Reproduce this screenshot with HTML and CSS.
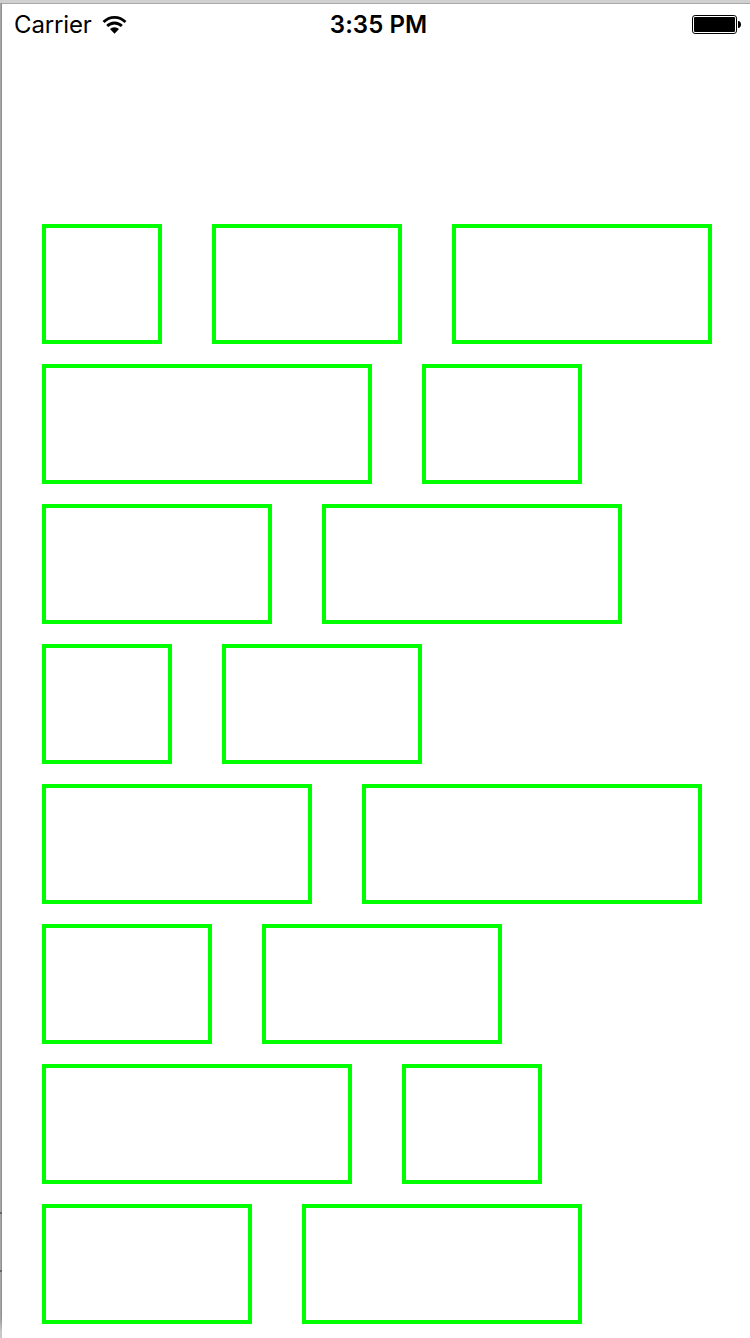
FILE: index.html
```html
<!DOCTYPE html>
<html lang="en">
<head>
<meta charset="utf-8">
<title>Flow layout</title>
<link rel="stylesheet" href="styles.css">
</head>
<body>
<div class="window">
  <div class="window-edge"><i class="notch notch-upper"></i><i class="notch notch-lower"></i></div>
  <main class="screen">
    <header class="status-bar">
      <div class="carrier">
        <span class="carrier-name">Carrier</span>
        <svg class="wifi" width="25" height="20" viewBox="0 0 26 20" preserveAspectRatio="none">
          <g fill="none" stroke="#000" stroke-width="2.9">
            <path d="M1.6 7.1a16 16 0 0 1 22.8 0"/>
            <path d="M5.4 11.1a10.7 10.7 0 0 1 15.2 0"/>
          </g>
          <path d="M8.3 14.1a6.6 6.6 0 0 1 9.4 0L13 18.7z"/>
        </svg>
      </div>
      <span class="time">3:35 PM</span>
      <svg class="battery" width="50" height="20" viewBox="0 0 50 20">
        <rect x=".5" y=".5" width="44" height="18" rx="2.6" fill="#fff" stroke="#000" stroke-width="1"/>
        <rect x="2" y="2" width="41" height="15" rx="1.2"/>
        <path d="M46 6c4 0 4 7 0 7z"/>
      </svg>
    </header>
    <section class="rows">
      <div class="row"><div class="box w120"></div><div class="box w190"></div><div class="box w260"></div></div>
      <div class="row"><div class="box w330"></div><div class="box w160"></div></div>
      <div class="row"><div class="box w230"></div><div class="box w300"></div></div>
      <div class="row"><div class="box w130"></div><div class="box w200"></div></div>
      <div class="row"><div class="box w270"></div><div class="box w340"></div></div>
      <div class="row"><div class="box w170"></div><div class="box w240"></div></div>
      <div class="row"><div class="box w310"></div><div class="box w140"></div></div>
      <div class="row"><div class="box w210"></div><div class="box w280"></div></div>
    </section>
  </main>
</div>
</body>
</html>
```
FILE: styles.css
```css
* { box-sizing: border-box; }
body { margin: 0; background: #fff; font-family: Inter, "Liberation Sans", sans-serif; }
.window {
  display: flex;
  height: 1338px;
  overflow: hidden;
  border-top: 3px solid #d0d0d0;
}
.window-edge {
  position: relative;
  width: 2px;
  flex: none;
  background: linear-gradient(to right, #a6a6a6 50%, #909090 50%);
}
.window-edge::after {
  content: "";
  position: absolute;
  inset: auto 0 0;
  height: 20px;
  background: linear-gradient(transparent, #c8c8c8 70%);
}
.notch { position: absolute; left: 0; width: 2px; height: 2px; background: #666; }
.notch-upper { top: 1209px; }
.notch-lower { top: 1267px; }
.screen { flex: 1; border-top: 1px solid #a9a9a9; }
.status-bar {
  display: grid;
  grid-template-columns: 1fr auto 1fr;
  align-items: center;
  height: 42px;
  padding: 0 8px 0 12px;
  color: #000;
  white-space: nowrap;
}
.carrier { display: flex; align-items: center; gap: 10px; }
.carrier-name { font-size: 24px; line-height: 42px; letter-spacing: -0.15px; }
.time { padding-left: 1px; font-size: 24px; line-height: 42px; font-weight: 600; letter-spacing: 0.05px; }
.battery { justify-self: end; }
.rows {
  display: flex;
  flex-direction: column;
  gap: 20px;
  padding: 178px 0 0 40px;
}
.row { display: flex; gap: 50px; }
.box { flex: none; height: 120px; border: 4px solid #0f0; }
.w120 { width: 120px; }
.w130 { width: 130px; }
.w140 { width: 140px; }
.w160 { width: 160px; }
.w170 { width: 170px; }
.w190 { width: 190px; }
.w200 { width: 200px; }
.w210 { width: 210px; }
.w230 { width: 230px; }
.w240 { width: 240px; }
.w260 { width: 260px; }
.w270 { width: 270px; }
.w280 { width: 280px; }
.w300 { width: 300px; }
.w310 { width: 310px; }
.w330 { width: 330px; }
.w340 { width: 340px; }
```
